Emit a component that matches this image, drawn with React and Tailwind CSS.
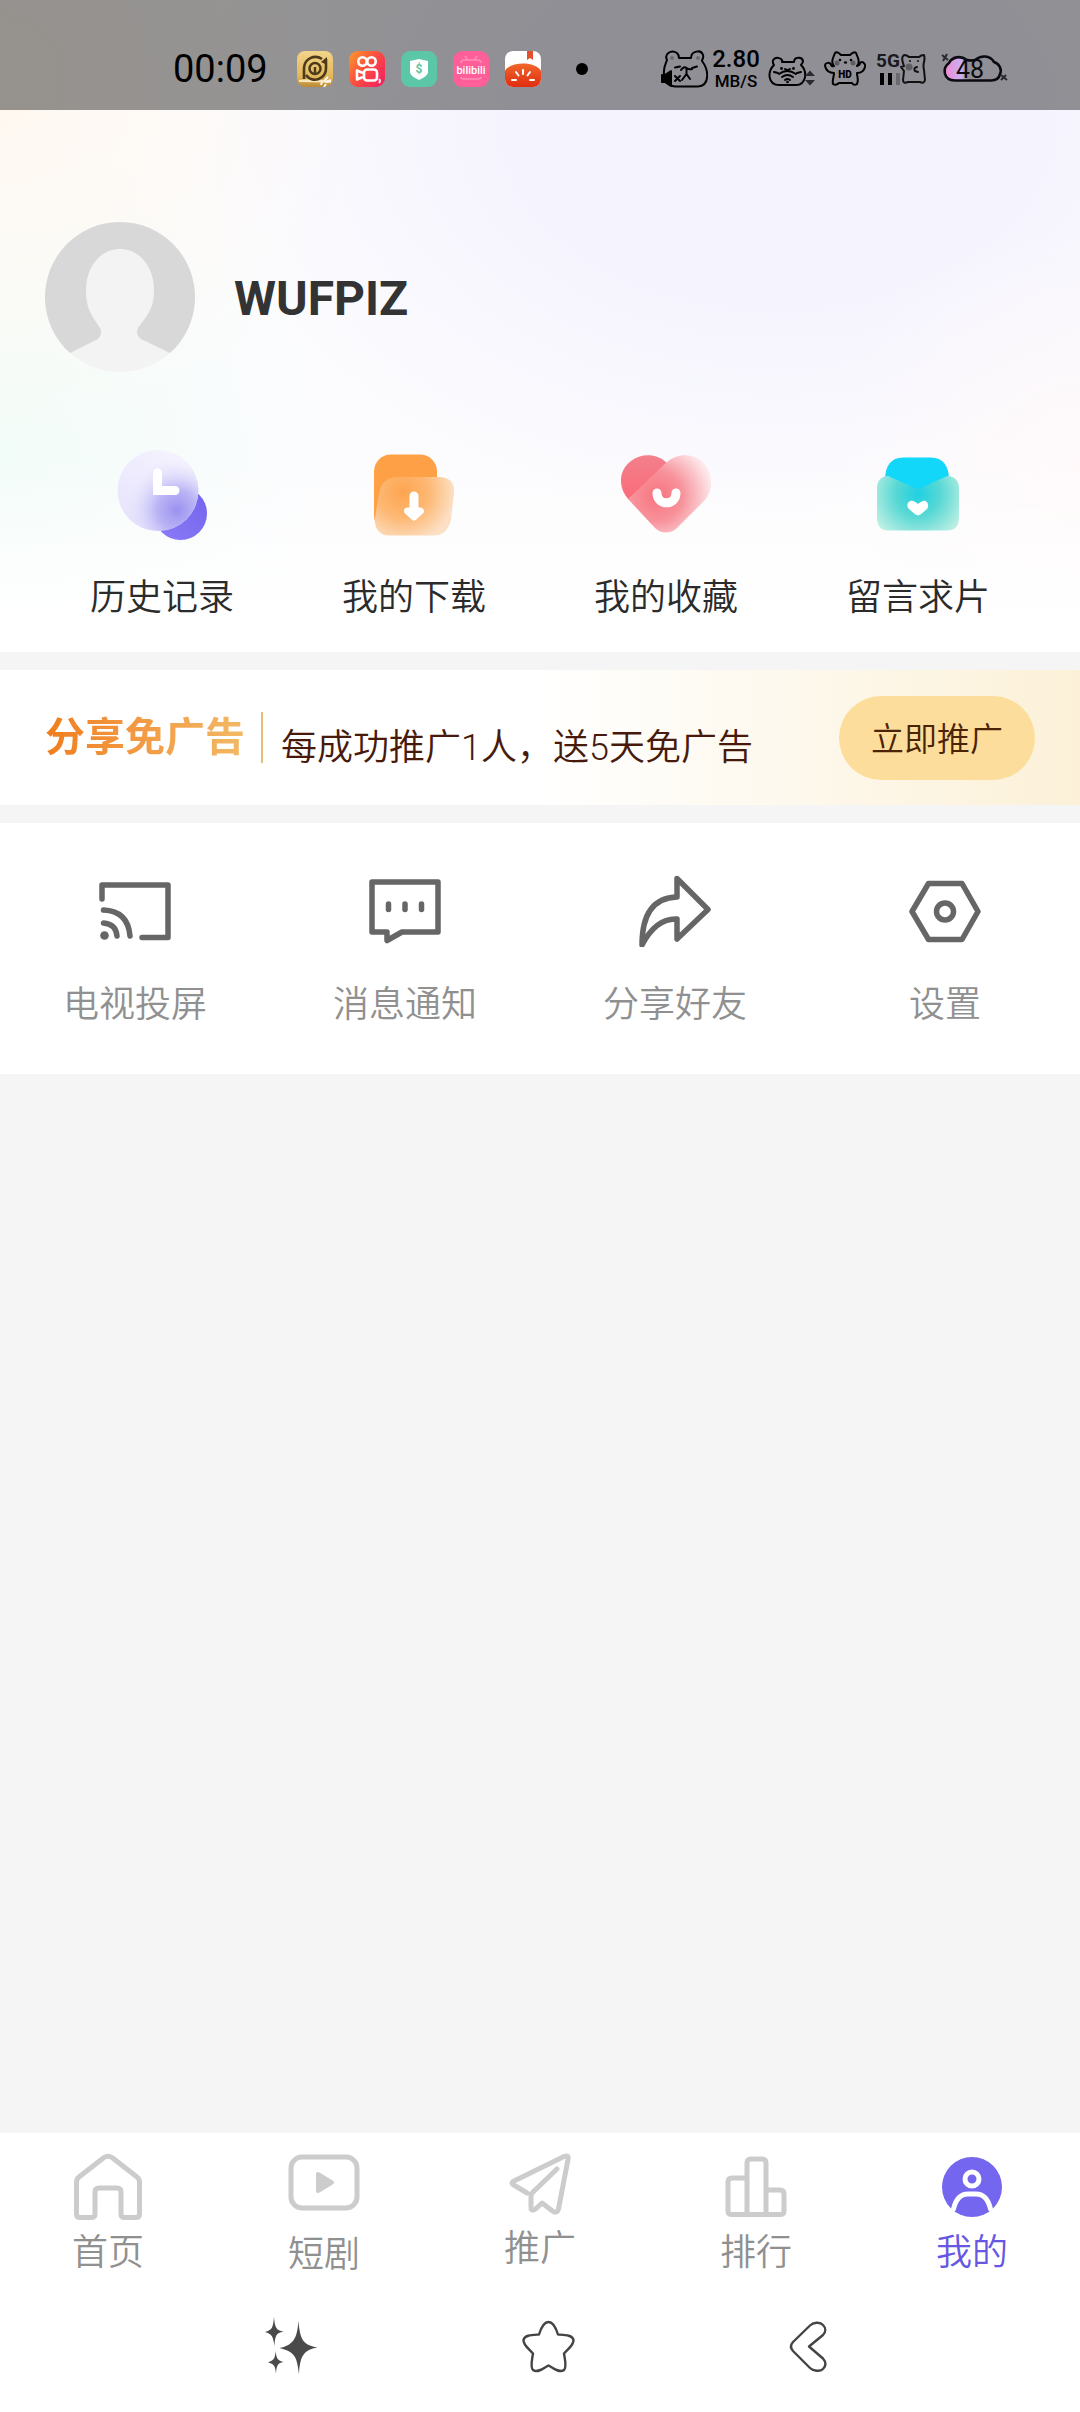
import React, { useState } from 'react';

const FONT = "font-[Roboto,'Noto_Sans_CJK_SC',sans-serif]";

/* ---------- status bar ---------- */

const GoldApp = () => (
  <svg className="size-9" viewBox="0 0 36 36" fill="none">
    <defs>
      <linearGradient id="gold" x1="0" y1="0" x2="0" y2="1">
        <stop offset="0" stopColor="#f3d48a" />
        <stop offset="0.7" stopColor="#e2b95c" />
        <stop offset="1" stopColor="#b98a35" />
      </linearGradient>
    </defs>
    <rect width="36" height="36" rx="8" fill="url(#gold)" />
    <path d="M2 29 Q16 27 34 30 V32 Q16 31 2 31Z" fill="#fbe7bd" />
    <path d="M7 28 V17 A11.500 11.500 0 0 1 25 8" stroke="#4d3a1b" strokeWidth="2.600" />
    <path d="M29 8 V17 A11 11 0 0 1 9 24" stroke="#4d3a1b" strokeWidth="2.600" />
    <path d="M24 11 L30 6 V14Z" fill="#4d3a1b" />
    <circle cx="18" cy="17.500" r="5.500" stroke="#4d3a1b" strokeWidth="2.500" />
    <path d="M18 16 V22" stroke="#4d3a1b" strokeWidth="2.400" />
    <path d="M31 26 L27 30 M34 29 L29 31 M29 33 L27 36 M25 31 L24 34" stroke="#fff5ea" strokeWidth="2" />
  </svg>
);

const KuaiApp = () => (
  <svg className="size-9" viewBox="0 0 36 36" fill="none">
    <defs>
      <linearGradient id="kuai" x1="0" y1="0" x2="1" y2="0.8">
        <stop offset="0" stopColor="#ff9a2a" />
        <stop offset="0.5" stopColor="#fb4f3f" />
        <stop offset="1" stopColor="#f4245f" />
      </linearGradient>
    </defs>
    <rect width="36" height="36" rx="9" fill="url(#kuai)" />
    <g stroke="#fff" strokeWidth="2.600" strokeLinejoin="round">
      <circle cx="13.500" cy="10.500" r="4.200" />
      <circle cx="22.500" cy="10.500" r="4.200" />
      <rect x="15" y="18.500" width="13" height="11" rx="3" />
      <path d="M14 22 L8 19.500 V28.500 L14 26" />
    </g>
    <path d="M30 28 q2 2 0 4" stroke="#ffd9e2" strokeWidth="2" />
  </svg>
);

const ShieldApp = () => (
  <svg className="size-9" viewBox="0 0 36 36">
    <rect width="36" height="36" rx="9" fill="#5cc7a6" />
    <path d="M18 8 L27 10 V21 Q27 25 18 29 Q9 25 9 21 V10Z" fill="#fff" />
    <text x="18" y="22" textAnchor="middle" fontSize="12" fontWeight="700" fill="#5cc7a6">$</text>
  </svg>
);

const BiliApp = () => (
  <svg className="size-9" viewBox="0 0 36 36" fill="none">
    <rect width="36" height="36" rx="9" fill="#ff5f98" />
    <path d="M12 5 L15 9 M24 5 L21 9 M8 12 Q8 9 11 9 H25 Q28 9 28 12 M8 26 Q8 28 11 28 H25 Q28 28 28 26" stroke="#ff8fb6" strokeWidth="1.500" />
    <text x="18" y="23" textAnchor="middle" fontSize="11" fontWeight="500" fill="#fff">bilibili</text>
  </svg>
);

const TomatoApp = () => (
  <svg className="size-9" viewBox="0 0 36 36">
    <defs>
      <clipPath id="tomatoClip"><rect width="36" height="36" rx="8" /></clipPath>
      <linearGradient id="tomato" x1="0" y1="0" x2="0" y2="1">
        <stop offset="0" stopColor="#f0682c" />
        <stop offset="1" stopColor="#e02c10" />
      </linearGradient>
    </defs>
    <g clipPath="url(#tomatoClip)">
      <rect width="36" height="36" fill="#fff" />
      <path d="M22 0 H28 V9 L25 7 L22 9Z" fill="#e2502e" />
      <path d="M0 20 C5 10 31 10 36 20 V36 H0Z" fill="url(#tomato)" />
      <path d="M18 19 V23 M11 21 L13.500 24.500 M25 21 L22.500 24.500 M7 29 H11 M29 29 H25" stroke="#fff" strokeWidth="2" strokeLinecap="round" />
    </g>
  </svg>
);

const MuteBear = () => (
  <svg className="w-12 h-[38px]" viewBox="0 0 48 38" fill="none" stroke="#000" strokeWidth="2" strokeLinecap="round" strokeLinejoin="round">
    <path d="M7 10 C4 4 11 -1 17 3 Q19 5 19 8 H31 C31 1 41 -1 43 5 C44 8 42 9 42 11 C49 20 50 36 38 36.500 H15 C8 36 3 30 4 21 C4 16 6 13 7 10Z" />
    <path d="M15 17.500 L20 16.500 M32 18 L37 16.500 M21 20 Q24 16 26.500 18 Q29 20 32 19 M26.500 19 V24 L22 30 M26.500 24 L30 29" />
    <path d="M15 26 L20 31 M20 26 L15 31" />
    <path d="M2 25 H5 L11 21 V36 L5 32 H2Z" fill="#000" />
    <g fill="#6f6d73" stroke="none">
      <circle cx="12" cy="8" r="2" />
      <circle cx="38" cy="8" r="2" />
    </g>
  </svg>
);

const WifiBear = () => (
  <svg className="w-12 h-[38px]" viewBox="0 0 48 38" fill="none" stroke="#000" strokeWidth="2" strokeLinecap="round" strokeLinejoin="round">
    <path d="M6 15 C2 9 9 6 13 9 Q15 11 14 12 H26 C26 7 34 6 35 11 C35 13 34 14 33 15 C40 22 38 35 28 35 H11 C0 35 -1 22 6 15Z" />
    <path d="M11 24 Q19 18 28 24 M14 27 Q19.500 23 25 27 M17 30 Q19.500 28 22 30" />
    <path d="M6 22 L10 23 M33 22 L29 23 M17 19 Q19.500 21 22 19" />
    <g fill="#000" stroke="none">
      <circle cx="19.500" cy="32" r="1.300" />
      <circle cx="13.500" cy="18.500" r="1.400" />
      <circle cx="25.500" cy="18.500" r="1.400" />
      <path d="M37 26 L42 20.500 L47 26Z M37 30 H47 L42 35.500Z" fill="#2b2a30" />
    </g>
  </svg>
);

const HdBear = () => (
  <svg className="w-[42px] h-[38px]" viewBox="0 0 42 38" fill="none" stroke="#000" strokeWidth="2" strokeLinecap="round" strokeLinejoin="round">
    <path d="M10 16 C8 14 8 11 9 8 L11 3 Q13 1 17 5 H26 Q30 1 32 3 L34 8 C35 11 35 14 33 16 Q36 15 36 13 C38 10 42 14 41 17 C40 21 37 23 33 23 C33 27 35 30 33 34 Q30 36 28 33 H15 Q12 36 9 34 C8 30 10 27 10 23 C5 23 2 20 1 16 C1 12 6 12 7 15 Q8 17 10 16Z" />
    <g fill="#000" stroke="none">
      <circle cx="16" cy="10" r="1.300" />
      <circle cx="27" cy="10" r="1.300" />
      <ellipse cx="21.500" cy="12.500" rx="1.600" ry="1.200" />
      <circle cx="13" cy="13" r="2.500" opacity="0.35" />
      <circle cx="29" cy="13" r="2.500" opacity="0.35" />
      <text x="21" y="28" textAnchor="middle" fontSize="10" fontWeight="900">HD</text>
    </g>
  </svg>
);

const Hamster = () => (
  <svg className="w-7 h-8" viewBox="0 0 28 32" fill="none" stroke="#111" strokeWidth="2" strokeLinecap="round" strokeLinejoin="round">
    <path d="M3 10 Q1 4 4 2 Q7 2 9 4 H19 Q21 2 24 2 Q25 5 24 9 Q23 13 24 17 L25 27 Q24 31 20 29 H8 Q3 31 3 27 L4 18 L1 14 L4 13Z" />
    <circle cx="10" cy="8" r="1" fill="#111" stroke="none" />
    <circle cx="18" cy="8" r="1" fill="#111" stroke="none" />
    <circle cx="9" cy="14" r="3.500" fill="#4a4950" stroke="none" opacity="0.7" />
    <path d="M17 14 Q13 15 15 18 L18 19" />
  </svg>
);

const CloudBattery = () => (
  <svg className="w-[68px] h-[34px]" viewBox="0 0 68 34" fill="none">
    <defs>
      <linearGradient id="cloud" x1="0" y1="0" x2="1" y2="0">
        <stop offset="0" stopColor="#f08ad0" />
        <stop offset="0.3" stopColor="#c8b0f4" />
        <stop offset="0.4" stopColor="#c8b0f4" stopOpacity="0" />
      </linearGradient>
    </defs>
    <path d="M15 28.500 C3 28 2 16 9 11 C12 5 20 3 27 8 Q31 9 35 8 C41 3 50 3 54 10 C60 12 62 18 60 22 C59 27 55 28.500 51 28.500Z" fill="url(#cloud)" stroke="#0b0a10" strokeWidth="2.600" />
    <path d="M2 3 L8 8 M7 2 L3 9 M61 28 L66 23 M61 23 L67 28" stroke="#2b2a30" strokeWidth="2" />
    <text x="30" y="26" textAnchor="middle" fontSize="25" fontWeight="400" fill="#0b0a10">48</text>
  </svg>
);

const StatusBar = () => (
  <div className="h-[110px] pt-7 pl-[173px] pr-[72px] flex items-center justify-between bg-black/41 text-black">
    <div className="flex items-center">
      <span className="text-[38px] leading-none">00:09</span>
      <div className="ml-[29px] flex gap-4">
        <GoldApp />
        <KuaiApp />
        <ShieldApp />
        <BiliApp />
        <TomatoApp />
      </div>
      <span className="ml-[35px] size-3 rounded-full bg-black" />
    </div>
    <div className="flex items-center">
      <MuteBear />
      <div className="ml-1 w-12 flex flex-col items-center font-medium">
        <span className="text-2xl leading-6">2.80</span>
        <span className="text-[17px] leading-5">MB/S</span>
      </div>
      <div className="ml-2"><WifiBear /></div>
      <div className="ml-2"><HdBear /></div>
      <div className="ml-2.5 w-6 flex flex-col gap-1">
        <span className="text-[19px] leading-4 font-bold text-[#1b1a1e]">5G</span>
        <div className="ml-1 flex gap-1">
          <span className="w-1 h-3 bg-black" />
          <span className="w-1 h-3 bg-black" />
          <span className="w-1 h-3 bg-[#6b6a70]" />
        </div>
      </div>
      <Hamster />
      <div className="ml-3"><CloudBattery /></div>
    </div>
  </div>
);

/* ---------- profile + shortcuts ---------- */

const Avatar = () => (
  <svg className="size-[150px] shrink-0" viewBox="0 0 150 150">
    <circle cx="75" cy="75" r="75" fill="#f3f3f3" />
    <path d="M25 131 A75 75 0 1 1 125 131 L96 117 Q90 112 93 106 C102 93 109 88 109 68 C109 44 94 27 75 27 C56 27 41 44 41 68 C41 88 47 93 55 106 Q58 112 53 117Z" fill="#d8d8d8" />
  </svg>
);

const HistoryIcon = () => (
  <svg className="size-[90px]" viewBox="0 0 90 90" fill="none">
    <defs>
      <linearGradient id="hisBack" x1="0" y1="1" x2="1" y2="0">
        <stop offset="0" stopColor="#8d7cf8" />
        <stop offset="1" stopColor="#7164ec" />
      </linearGradient>
      <linearGradient id="hisGlass" x1="0" y1="1" x2="0.6" y2="0">
        <stop offset="0" stopColor="#e4e1fc" />
        <stop offset="1" stopColor="#f4f2fe" />
      </linearGradient>
      <radialGradient id="hisGlow" gradientUnits="userSpaceOnUse" cx="60" cy="60" r="50">
        <stop offset="0" stopColor="#9a90f0" />
        <stop offset="0.4" stopColor="#aea7f3" stopOpacity="0.8" />
        <stop offset="1" stopColor="#e3e0fc" stopOpacity="0" />
      </radialGradient>
    </defs>
    <circle cx="63.500" cy="63.500" r="26.500" fill="url(#hisBack)" />
    <circle cx="41" cy="40.500" r="40.500" fill="url(#hisGlass)" />
    <circle cx="41" cy="40.500" r="40.500" fill="url(#hisGlow)" />
    <path d="M40.500 23 V40.500 H58" stroke="#fff" strokeWidth="9" strokeLinecap="round" />
  </svg>
);

const DownloadIcon = () => (
  <svg className="size-[90px]" viewBox="0 0 90 90" fill="none">
    <defs>
      <radialGradient id="dlGlass" gradientUnits="userSpaceOnUse" cx="34" cy="42" r="52">
        <stop offset="0" stopColor="#fda550" />
        <stop offset="0.5" stopColor="#fdb873" />
        <stop offset="1" stopColor="#fce0c6" />
      </radialGradient>
    </defs>
    <rect x="5" y="4.500" width="63" height="78" rx="17" fill="#fea045" />
    <path d="M29 27 H69 C81 27 86 33 85 43 L82 70 C79 81 73 85.500 65 85.500 H20 C10 85.500 5 78 6 68 L10 43 C12 32 19 27 29 27Z" fill="url(#dlGlass)" />
    <path d="M45 46 V62" stroke="#fff" strokeWidth="9" strokeLinecap="round" />
    <path d="M38.500 61 L45 67 L51.500 61Z" fill="#fff" stroke="#fff" strokeWidth="7" strokeLinejoin="round" />
  </svg>
);

const FavoriteIcon = () => (
  <svg className="size-[90px]" viewBox="0 0 90 90" fill="none">
    <defs>
      <linearGradient id="favBack" x1="0" y1="0" x2="0" y2="1">
        <stop offset="0" stopColor="#f2808c" />
        <stop offset="1" stopColor="#fb6b78" />
      </linearGradient>
      <radialGradient id="favGlass" gradientUnits="userSpaceOnUse" cx="36" cy="46" r="56">
        <stop offset="0" stopColor="#f8747f" />
        <stop offset="0.45" stopColor="#f7929b" />
        <stop offset="1" stopColor="#fdeaec" />
      </radialGradient>
    </defs>
    <path d="M8 50 C-4 37 -2 20 10 11 C20 3 36 3 46 13 L20 48Z" fill="url(#favBack)" />
    <path d="M7 49 L46 12 C55 4 68 3 78 9 C92 19 94 38 84 50 L56 78 C50 84 40 84 34 78Z" fill="url(#favGlass)" />
    <path d="M36 43 C36 56 55 56 55 43" stroke="#fff" strokeWidth="9" strokeLinecap="round" />
  </svg>
);

const RequestIcon = () => (
  <svg className="size-[90px]" viewBox="0 0 90 90" fill="none">
    <defs>
      <radialGradient id="reqGlass" gradientUnits="userSpaceOnUse" cx="45" cy="44" r="50">
        <stop offset="0" stopColor="#1fd0e2" />
        <stop offset="0.45" stopColor="#58d8d4" />
        <stop offset="1" stopColor="#bff0e4" />
      </radialGradient>
    </defs>
    <path d="M12 30 C12 16 18 7.500 30 7.500 H58 C70 7.500 76 16 76 30 L45 45Z" fill="#12d7f9" />
    <path d="M15 26 L40 37 Q45 40 50 37 L74 26 C82 26 86 31 86 38 V68 C86 76 82 80.500 74 80.500 H15 C8 80.500 4 76 4 68 V38 C4 31 8 26 15 26Z" fill="url(#reqGlass)" />
    <path d="M45 65.500 Q43 65.500 36 59 C32 55 36 50 40 51 Q43 52 45 54 Q47 52 50 51 C54 50 57 55 54 59 Q47 65.500 45 65.500Z" fill="#fff" />
  </svg>
);

const shortcuts = [
  { label: '历史记录', Icon: HistoryIcon },
  { label: '我的下载', Icon: DownloadIcon },
  { label: '我的收藏', Icon: FavoriteIcon },
  { label: '留言求片', Icon: RequestIcon },
];

/* ---------- tools ---------- */

const CastIcon = () => (
  <>
    <path d="M3 24 V10 H69 V62.500 H43" />
    <path d="M4.500 35 Q29 36 31 61 M4.500 48 Q17 49 18 61" />
    <circle cx="5.500" cy="60.500" r="4.300" fill="#666" stroke="none" />
  </>
);

const NoticeIcon = () => (
  <>
    <path d="M3 7 H69 V57 H33 L18 65.500 V57 H3Z" />
    <path d="M19.500 29 V34.500 M36 29 V34.500 M52.500 29 V34.500" />
  </>
);

const ShareIcon = () => (
  <path d="M38 3.500 L69 34.500 L38 64 V44 Q17 43 3 70 Q3 23 38 22Z" />
);

const SettingIcon = () => (
  <>
    <path d="M19.500 8.500 H53 L69 36.500 L53 64.500 H19.500 L3 36.500Z" />
    <circle cx="36" cy="36.500" r="8.500" />
  </>
);

const tools = [
  { label: '电视投屏', Icon: CastIcon },
  { label: '消息通知', Icon: NoticeIcon },
  { label: '分享好友', Icon: ShareIcon },
  { label: '设置', Icon: SettingIcon },
];

/* ---------- bottom tabs ---------- */

const tabs = [
  {
    label: '首页',
    box: 'h-[82px]',
    art: <path d="M4.500 31 Q4.500 28 7 26 L32 6.500 Q36 4 40 6.500 L65 26 Q67.500 28 67.500 31 V63 Q67.500 66.500 64 66.500 H53 Q49 66.500 49 63 V41 Q49 37 45 37 H27 Q23 37 23 41 V63 Q23 66.500 19 66.500 H8 Q4.500 66.500 4.500 63Z" />,
  },
  {
    label: '短剧',
    box: 'h-[84px]',
    art: (
      <>
        <rect x="3" y="6" width="66" height="51" rx="11" />
        <path d="M30 23 V40 L44 31.500Z" fill="#ccc" strokeWidth="4" />
      </>
    ),
  },
  {
    label: '推广',
    box: 'h-[78px]',
    art: <path d="M23 42 L9 33.500 Q7 32 9 30.500 L60 5.500 Q65 3.500 64 8.500 L54.500 58 Q53 63 48.500 60 L38 52 L31.500 58 Q27 61 27 56 V45 Q27 43 28.500 41.500 L53 18" />,
  },
  {
    label: '排行',
    box: 'h-[82px]',
    art: <path d="M27 63.500 V12 Q27 8 31 8 H42 Q46 8 46 12 V63.500 M27 27 H12 Q8 27 8 31 V60 Q8 63.500 12 63.500 H60 Q64 63.500 64 60 V43 Q64 39 60 39 H46" />,
  },
  {
    label: '我的',
    box: 'h-[82px]',
    art: (
      <>
        <circle cx="36" cy="36" r="30" fill="#7466ee" stroke="none" />
        <circle cx="36" cy="28" r="7" stroke="#fff" />
        <path d="M17.500 58 Q21 43 32 43 H40 Q51 43 54.500 58" stroke="#fff" />
      </>
    ),
  },
];

const TabBar = () => {
  const [active, setActive] = useState('我的');

  return (
    <nav className="grid grid-cols-5 pt-[18px]">
      {tabs.map(({ label, box, art }) => (
        <button key={label} onClick={() => setActive(label)} className="flex flex-col items-center">
          <span className={box}>
            <svg className="size-[72px]" viewBox="0 0 72 72" fill="none" stroke="#ccc" strokeWidth="5" strokeLinecap="round" strokeLinejoin="round">
              {art}
            </svg>
          </span>
          <span className={active === label ? 'text-4xl leading-10 font-[350] text-[#6757e2]' : 'text-4xl leading-10 font-[350] text-[#909090]'}>
            {label}
          </span>
        </button>
      ))}
    </nav>
  );
};

const SystemBar = () => (
  <div className="grid grid-cols-3 justify-items-center pl-[162px] pr-36 pt-[41px] pb-9">
    <button aria-label="最近任务">
      <svg className="size-[60px]" viewBox="0 0 60 60" fill="#4a4a4a">
        <path d="M37.500 5 C39 22 41 29 56.500 31.500 C43 34 39 39 38 58.500 C36 39 33 36 18.500 32 C33 29 36 22 37.500 5Z" />
        <path d="M13 1 C14 12 15 14 22.500 15.500 C15 17 14 20 13.500 30 C12 20 11 18 4 16 C11 14 12 12 13 1Z" />
        <path d="M14.500 35 C15.500 43 17 44.500 22.500 46 C17 47 15.500 49 15 57.500 C14 49 13 48 7 46.500 C13 44 14 43 14.500 35Z" />
      </svg>
    </button>
    <button aria-label="主屏幕">
      <svg className="size-[60px]" viewBox="0 0 60 60" fill="none" stroke="#444" strokeWidth="2.400" strokeLinejoin="round">
        <path d="M29.500 6 C34 6 37 12 39 18.500 C46 19 53.500 19 54.500 24 C55 29 49 33 45 37.500 C46 44 48 51 45 54 C41 57 35 53 29.500 49.500 C24 53 18 57 14 54 C11 51 13 44 14 37.500 C10 33 4 29 4.500 24 C5.500 19 13 19 20 18.500 C22 12 25 6 29.500 6Z" />
      </svg>
    </button>
    <button aria-label="返回">
      <svg className="size-[60px]" viewBox="0 0 60 60" fill="none" stroke="#444" strokeWidth="2.400" strokeLinejoin="round">
        <path d="M16 26 L33 9.500 C36 6.500 43 5.500 46 9 C49 12 49 16 46 19 L32 30.500 L46 42.500 C49 46 49 50 46 53 C43 56 36 55 33 52 L16 35 Q12 30.500 16 26Z" />
      </svg>
    </button>
  </div>
);

const App = () => {
  return (
    <div className={`min-h-screen flex flex-col bg-[#f5f5f5] ${FONT}`}>
      <header className="bg-[#fcfcfe] bg-[linear-gradient(to_bottom,transparent_70%,white_96%),radial-gradient(circle_at_0%_12%,#fff8f0,transparent_30%),radial-gradient(circle_at_0%_70%,#f2fcf8,transparent_28%),radial-gradient(circle_at_100%_74%,#fff9fa,transparent_22%),radial-gradient(ellipse_at_72%_18%,#f4f3fe_20%,transparent_54%)]">
        <StatusBar />

        <div className="pt-28 px-[45px] flex items-center gap-[39px]">
          <Avatar />
          <h1 className="pt-1 text-5xl font-bold text-[#333]">WUFPIZ</h1>
        </div>

        <div className="mt-[78px] px-9 pb-[30px] grid grid-cols-4">
          {shortcuts.map(({ label, Icon }) => (
            <button key={label} className="flex flex-col items-center gap-[34px]">
              <Icon />
              <span className="text-4xl leading-[48px] font-[350] text-[#2b2b2b]">{label}</span>
            </button>
          ))}
        </div>
      </header>

      <main className="flex-1 pt-[18px] flex flex-col gap-[18px]">
        {/* Promotion banner */}
        <section className="h-[135px] px-[45px] flex items-center bg-linear-to-r from-white from-50% to-[#fcf1d8]">
          <strong className="text-[40px] leading-[48px] font-bold bg-linear-to-r from-[#f07d1a] to-[#f2b965] bg-clip-text text-transparent">
            分享免广告
          </strong>
          <span className="ml-4 w-0.5 h-[51px] bg-[#e8bd78]" />
          <p className="ml-[18px] pt-5 text-4xl leading-[48px] font-[350] text-[#471a0c]">每成功推广1人，送5天免广告</p>
          <button className="ml-auto h-[84px] px-8 pt-1 rounded-full bg-[#fddd9c] text-[33px] font-[350] text-[#4a2404]">
            立即推广
          </button>
        </section>

        {/* Tools */}
        <section className="pt-[52px] pb-[45px] grid grid-cols-4 bg-white">
          {tools.map(({ label, Icon }) => (
            <button key={label} className="flex flex-col items-center gap-[34px]">
              <svg className="size-[72px]" viewBox="0 0 72 72" fill="none" stroke="#666" strokeWidth="5.500" strokeLinecap="round" strokeLinejoin="round">
                <Icon />
              </svg>
              <span className="text-4xl leading-[48px] font-[350] text-[#909090]">{label}</span>
            </button>
          ))}
        </section>
      </main>

      <footer className="bg-white">
        <TabBar />
        <SystemBar />
      </footer>
    </div>
  );
};

export default App;
